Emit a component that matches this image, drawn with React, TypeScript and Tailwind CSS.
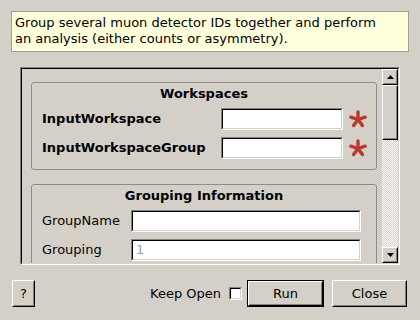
import React from "react";

const Star: React.FC = () => (
    <svg width="18" height="18" viewBox="0 0 18 18" className="ml-[6px] shrink-0">
        {[0, 72, 144, 216, 288].map((a) => (
            <line
                key={a}
                x1="9"
                y1="9.5"
                x2={9 + 7.5 * Math.sin((a * Math.PI) / 180)}
                y2={9.5 - 7.5 * Math.cos((a * Math.PI) / 180)}
                stroke="#b93a2c"
                strokeWidth="3.4"
                strokeLinecap="round"
            />
        ))}
    </svg>
);

const Field: React.FC<{ width: string; placeholder?: string }> = ({ width, placeholder }) => (
    <div className={`${width} h-[22px] shrink-0 border border-t-[#808080] border-l-[#808080] border-b-white border-r-white`}>
        <div className="h-full border border-t-black border-l-black border-b-[#d4d0c8] border-r-[#d4d0c8] bg-white px-[3px] text-[13px] leading-[18px] text-[#a0a0a0]">
            {placeholder}
        </div>
    </div>
);

const Raised: React.FC<{ className?: string; children?: React.ReactNode }> = ({ className, children }) => (
    <div className={`border border-t-white border-l-white border-b-black border-r-black ${className ?? ""}`}>
        <div className="flex h-full items-center justify-center border border-t-[#d4d0c8] border-l-[#d4d0c8] border-b-[#808080] border-r-[#808080] bg-[#d4d0c8]">
            {children}
        </div>
    </div>
);

const GroupBox: React.FC<{ title: string; children: React.ReactNode; className?: string }> = ({ title, children, className }) => (
    <div className={`rounded-[3px] border border-[#8c8c8c] px-[9px] ${className ?? ""}`}>
        <div className="mt-[3px] text-center text-[13px] font-bold leading-[16px]">{title}</div>
        <div className="mt-[6px] flex flex-col gap-[7px]">{children}</div>
    </div>
);

export default function App() {
    return (
        <div
            className="h-[320px] w-[420px] overflow-hidden bg-[#d4d0c8] pt-[11px] text-black"
            style={{ fontFamily: '"DejaVu Sans", sans-serif' }}
        >
            <div className="ml-[11px] w-[398px] border border-[#a0a0a0] bg-[#ffffdc] px-[3px] pb-[4px] pt-[3px] text-[13px] leading-[16px]">
                Group several muon detector IDs together and perform
                <br />
                an analysis (either counts or asymmetry).
            </div>

            <div className="ml-[20px] mt-[15px] h-[198px] w-[380px] border border-t-[#808080] border-l-[#808080] border-b-white border-r-white">
                <div className="flex h-full border border-t-black border-l-black border-b-[#d4d0c8] border-r-[#d4d0c8]">
                    <div className="h-full flex-1 overflow-hidden pl-[9px] pr-[5px] pt-[13px]">
                        <GroupBox title="Workspaces" className="h-[88px]">
                            <div className="flex items-center">
                                <span className="w-[182px] pl-[1px] text-[13px] font-bold">InputWorkspace</span>
                                <Field width="w-[122px]" />
                                <Star />
                            </div>
                            <div className="flex items-center">
                                <span className="w-[182px] pl-[1px] text-[13px] font-bold">InputWorkspaceGroup</span>
                                <Field width="w-[122px]" />
                                <Star />
                            </div>
                        </GroupBox>
                        <GroupBox title="Grouping Information" className="mt-[14px] h-[120px]">
                            <div className="flex items-center">
                                <span className="w-[90px] pl-[1px] text-[13px]">GroupName</span>
                                <Field width="w-[230px]" />
                            </div>
                            <div className="flex items-center">
                                <span className="w-[90px] pl-[1px] text-[13px]">Grouping</span>
                                <Field width="w-[230px]" placeholder="1" />
                            </div>
                        </GroupBox>
                    </div>
                    <div className="flex h-full w-[16px] flex-col">
                        <Raised className="h-[16px]">
                            <svg width="7" height="4" viewBox="0 0 7 4">
                                <path d="M3.5 0 L7 4 L0 4 Z" fill="black" />
                            </svg>
                        </Raised>
                        <Raised className="h-[55px]" />
                        <div className="flex-1 bg-[repeating-conic-gradient(#d4d0c8_0_25%,#ffffff_0_50%)] bg-[length:2px_2px]" />
                        <Raised className="h-[16px]">
                            <svg width="7" height="4" viewBox="0 0 7 4">
                                <path d="M0 0 L7 0 L3.5 4 Z" fill="black" />
                            </svg>
                        </Raised>
                    </div>
                </div>
            </div>

            <div className="mt-[15px] flex items-center pl-[12px] pr-[13px] text-[13px]">
                <Raised className="h-[27px] w-[23px]">?</Raised>
                <div className="flex-1" />
                <span>Keep Open</span>
                <div className="ml-[8px] h-[13px] w-[13px] border border-t-[#808080] border-l-[#808080] border-b-white border-r-white">
                    <div className="h-full border border-t-black border-l-black border-b-[#d4d0c8] border-r-[#d4d0c8] bg-white" />
                </div>
                <div className="ml-[5px] border border-black">
                    <Raised className="h-[25px] w-[75px]">Run</Raised>
                </div>
                <Raised className="ml-[8px] h-[27px] w-[75px]">Close</Raised>
            </div>
        </div>
    );
}
